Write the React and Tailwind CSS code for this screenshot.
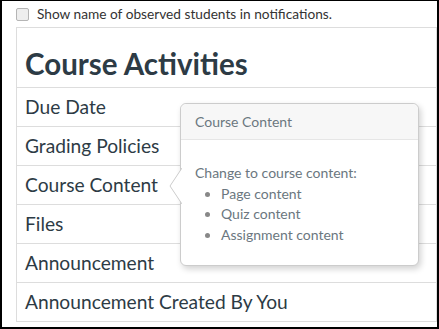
const ROWS = ["Due Date", "Grading Policies", "Course Content", "Files", "Announcement", "Announcement Created By You"];

export default function App() {
  return (
    <div className="relative h-[329px] w-[439px] overflow-hidden border-2 border-t border-black bg-white font-['Lato',sans-serif]">
      <label className="flex h-[26px] items-center gap-[8px] pl-[14px] text-[13.7px] text-[#333]">
        <span className="h-[13px] w-[13px] rounded-[2px] border border-[#b5b5b5] bg-[#eee]" />
        Show name of observed students in notifications.
      </label>
      <div className="ml-[14px] border-x border-t border-[#ddd]">
        <h2 className="flex h-[60px] items-end border-b border-[#ddd] pb-[9px] pl-[8px] text-[29.5px] font-bold leading-none text-[#2d3b45]">
          Course Activities
        </h2>
        {ROWS.map((row) => (
          <div key={row} className="flex h-[39px] items-center border-b border-[#ddd] pl-[8px] text-[19.2px] text-[#2d3b45]">
            {row}
          </div>
        ))}
      </div>

      <div className="absolute left-[178px] top-[102px] w-[239px] rounded-[6px] border border-[#ccc] bg-white shadow-[2px_3px_6px_rgba(0,0,0,0.18)]">
        <svg className="absolute left-[-12px] top-[64px]" width="13" height="36" viewBox="0 0 13 36">
          <path d="M13 0 L1 18 L13 36" fill="white" stroke="#ccc" strokeWidth="1" />
        </svg>
        <div className="flex h-[36px] items-center rounded-t-[6px] border-b border-[#e6e6e6] bg-[#f7f7f7] pl-[14px] text-[14px] text-[#6b7780]">
          Course Content
        </div>
        <div className="px-[14px] pb-[20px] pt-[23px] text-[14px] leading-[20.5px] text-[#6b7780]">
          <p>Change to course content:</p>
          <ul className="list-disc pl-[26px] marker:text-[#888]">
            <li>Page content</li>
            <li>Quiz content</li>
            <li>Assignment content</li>
          </ul>
        </div>
      </div>
    </div>
  );
}
